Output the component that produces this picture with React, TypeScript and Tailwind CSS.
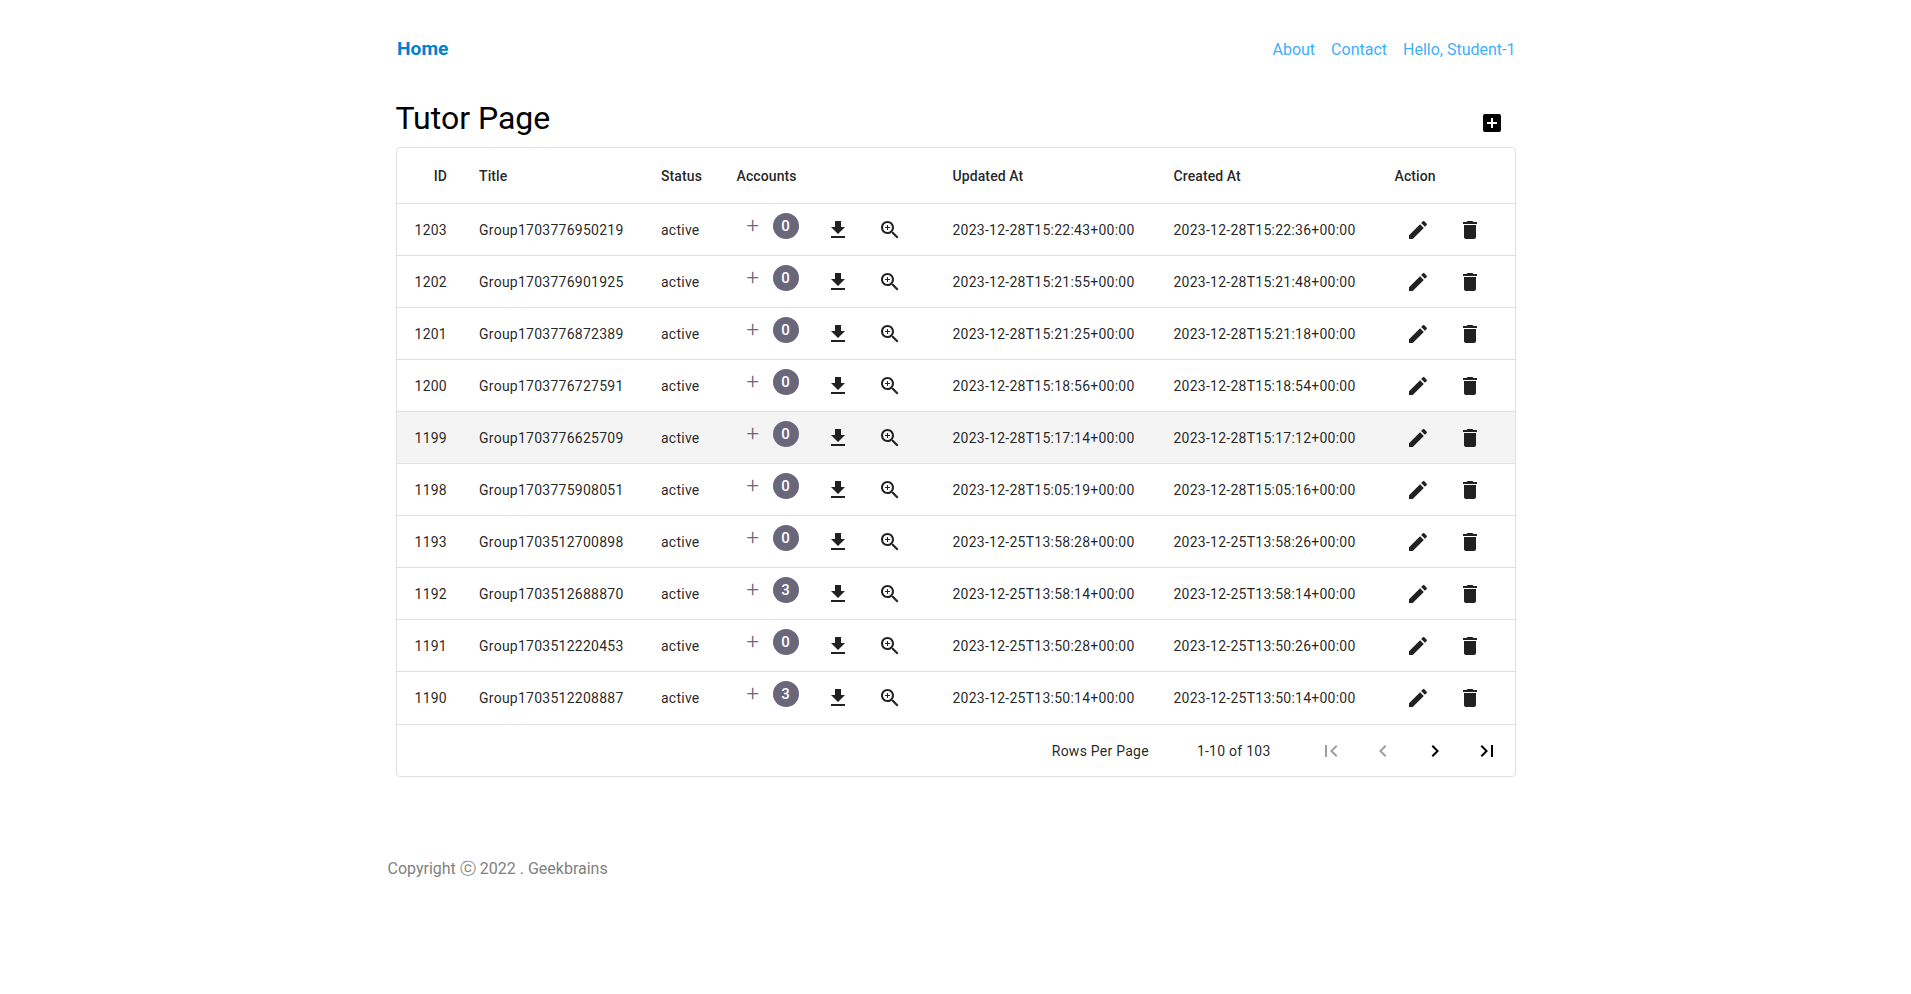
import React from "react";

const rows: [string, string, string, string, string][] = [
  ["1203", "Group1703776950219", "0", "2023-12-28T15:22:43+00:00", "2023-12-28T15:22:36+00:00"],
  ["1202", "Group1703776901925", "0", "2023-12-28T15:21:55+00:00", "2023-12-28T15:21:48+00:00"],
  ["1201", "Group1703776872389", "0", "2023-12-28T15:21:25+00:00", "2023-12-28T15:21:18+00:00"],
  ["1200", "Group1703776727591", "0", "2023-12-28T15:18:56+00:00", "2023-12-28T15:18:54+00:00"],
  ["1199", "Group1703776625709", "0", "2023-12-28T15:17:14+00:00", "2023-12-28T15:17:12+00:00"],
  ["1198", "Group1703775908051", "0", "2023-12-28T15:05:19+00:00", "2023-12-28T15:05:16+00:00"],
  ["1193", "Group1703512700898", "0", "2023-12-25T13:58:28+00:00", "2023-12-25T13:58:26+00:00"],
  ["1192", "Group1703512688870", "3", "2023-12-25T13:58:14+00:00", "2023-12-25T13:58:14+00:00"],
  ["1191", "Group1703512220453", "0", "2023-12-25T13:50:28+00:00", "2023-12-25T13:50:26+00:00"],
  ["1190", "Group1703512208887", "3", "2023-12-25T13:50:14+00:00", "2023-12-25T13:50:14+00:00"],
];

const ADD_BOX =
  "M19 3H5c-1.11 0-2 .9-2 2v14c0 1.1.89 2 2 2h14c1.1 0 2-.9 2-2V5c0-1.1-.9-2-2-2zm-2 10h-4v4h-2v-4H7v-2h4V7h2v4h4v2z";
const GET_APP = "M19 9h-4V3H9v6H5l7 7 7-7zM5 18v2h14v-2H5z";
const ZOOM_IN =
  "M15.5 14h-.79l-.28-.27C15.41 12.59 16 11.11 16 9.5 16 5.91 13.09 3 9.5 3S3 5.91 3 9.5 5.91 16 9.5 16c1.61 0 3.09-.59 4.23-1.57l.27.28v.79l5 4.99L20.49 19l-4.99-5zm-6 0C7.01 14 5 11.99 5 9.5S7.01 5 9.5 5 14 7.01 14 9.5 11.99 14 9.5 14zm2.5-4h-2v2H9v-2H7V9h2V7h1v2h2v1z";
const EDIT =
  "M3 17.25V21h3.75L17.81 9.94l-3.75-3.75L3 17.25zM20.71 7.04c.39-.39.39-1.02 0-1.41l-2.34-2.34c-.39-.39-1.02-.39-1.41 0l-1.83 1.83 3.75 3.75 1.83-1.83z";
const DELETE = "M6 19c0 1.1.9 2 2 2h8c1.1 0 2-.9 2-2V7H6v12zM19 4h-3.5l-1-1h-5l-1 1H5v2h14V4z";
const FIRST_PAGE = "M18.41 16.59L13.82 12l4.59-4.59L17 6l-6 6 6 6zM6 6h2v12H6z";
const CHEVRON_LEFT = "M15.41 7.41L14 6l-6 6 6 6 1.41-1.41L10.83 12z";
const CHEVRON_RIGHT = "M10 6L8.59 7.41 13.17 12l-4.58 4.59L10 18l6-6z";
const LAST_PAGE = "M5.59 7.41L10.18 12l-4.59 4.59L7 18l6-6-6-6zM16 6h2v12h-2z";

function Icon({ d }: { d: string }) {
  return (
    <svg viewBox="0 0 24 24" className="size-6 fill-current">
      <path d={d} />
    </svg>
  );
}

function IconButton({ d, disabled }: { d: string; disabled?: boolean }) {
  return (
    <button disabled={disabled} className="flex size-12 shrink-0 items-center justify-center disabled:text-black/38">
      <Icon d={d} />
    </button>
  );
}

const grid = "grid grid-cols-[66px_182px_75.5px_216px_221px_221px_1fr] items-center";

export default function App() {
  return (
    <div className="min-h-screen bg-white pl-px font-[Roboto,sans-serif] text-black">
      <div className="mx-auto w-[1120px] pt-[34px]">
        <nav className="flex h-[30px] items-center justify-between text-[16px] text-[#40aff9]">
          <a className="pl-px text-[19.2px] font-bold text-[#0080d0]">Home</a>
          <div className="flex gap-4 pt-px pr-[0.5px]">
            <a>About</a>
            <a>Contact</a>
            <a>Hello, Student-1</a>
          </div>
        </nav>

        <header className="flex h-[83px] items-end justify-between">
          <h1 className="-ml-[0.5px] pb-2 text-[32px] leading-[41px]">Tutor Page</h1>
          <IconButton d={ADD_BOX} />
        </header>

        <section className="rounded border border-[#e0e0e0] text-[14px] tracking-[0.25px] text-black/87">
          <div className={grid + " h-[55px] pt-0.5 font-medium tracking-[0.1px]"}>
            <span className="pr-4 text-right">ID</span>
            <span className="pl-4">Title</span>
            <span className="pl-4">Status</span>
            <span className="pl-4">Accounts</span>
            <span className="pl-4">Updated At</span>
            <span className="pl-4">Created At</span>
            <span className="pl-4">Action</span>
          </div>
          {rows.map(([id, title, count, updated, created]) => (
            <div
              key={id}
              className={grid + " h-[52px] border-t border-[#e0e0e0] pt-px" + (id === "1199" ? " bg-[#f4f4f4]" : "")}
            >
              <span className="pr-4 text-right">{id}</span>
              <span className="pl-4">{title}</span>
              <span className="pl-4">active</span>
              <div className="flex items-center pl-[26px]">
                <span className="mb-2 w-3 text-center text-[22px] leading-6 font-light tracking-normal text-[#6a677a]">
                  +
                </span>
                <span className="mb-2 ml-3.5 flex size-[26px] items-center justify-center rounded-full bg-[#6a677a] text-[15px] font-medium tracking-normal text-white">
                  {count}
                </span>
                <div className="ml-[15px] flex gap-1">
                  <IconButton d={GET_APP} />
                  <IconButton d={ZOOM_IN} />
                </div>
              </div>
              <span className="pl-4">{updated}</span>
              <span className="pl-4">{created}</span>
              <div className="flex gap-1 pl-[15.5px]">
                <IconButton d={EDIT} />
                <IconButton d={DELETE} />
              </div>
            </div>
          ))}
          <div className="mt-px flex h-[52px] items-center justify-end border-t border-[#e0e0e0] pt-px pr-1">
            <span className="mr-12">Rows Per Page</span>
            <span className="mr-[36.5px]">1-10 of 103</span>
            <div className="flex gap-1 text-black">
              <IconButton d={FIRST_PAGE} disabled />
              <IconButton d={CHEVRON_LEFT} disabled />
              <IconButton d={CHEVRON_RIGHT} />
              <IconButton d={LAST_PAGE} />
            </div>
          </div>
        </section>

        <footer className="-ml-[8.5px] mt-20 text-[16px] leading-6 text-[#808080]">Copyright ⓒ 2022 . Geekbrains</footer>
      </div>
    </div>
  );
}
